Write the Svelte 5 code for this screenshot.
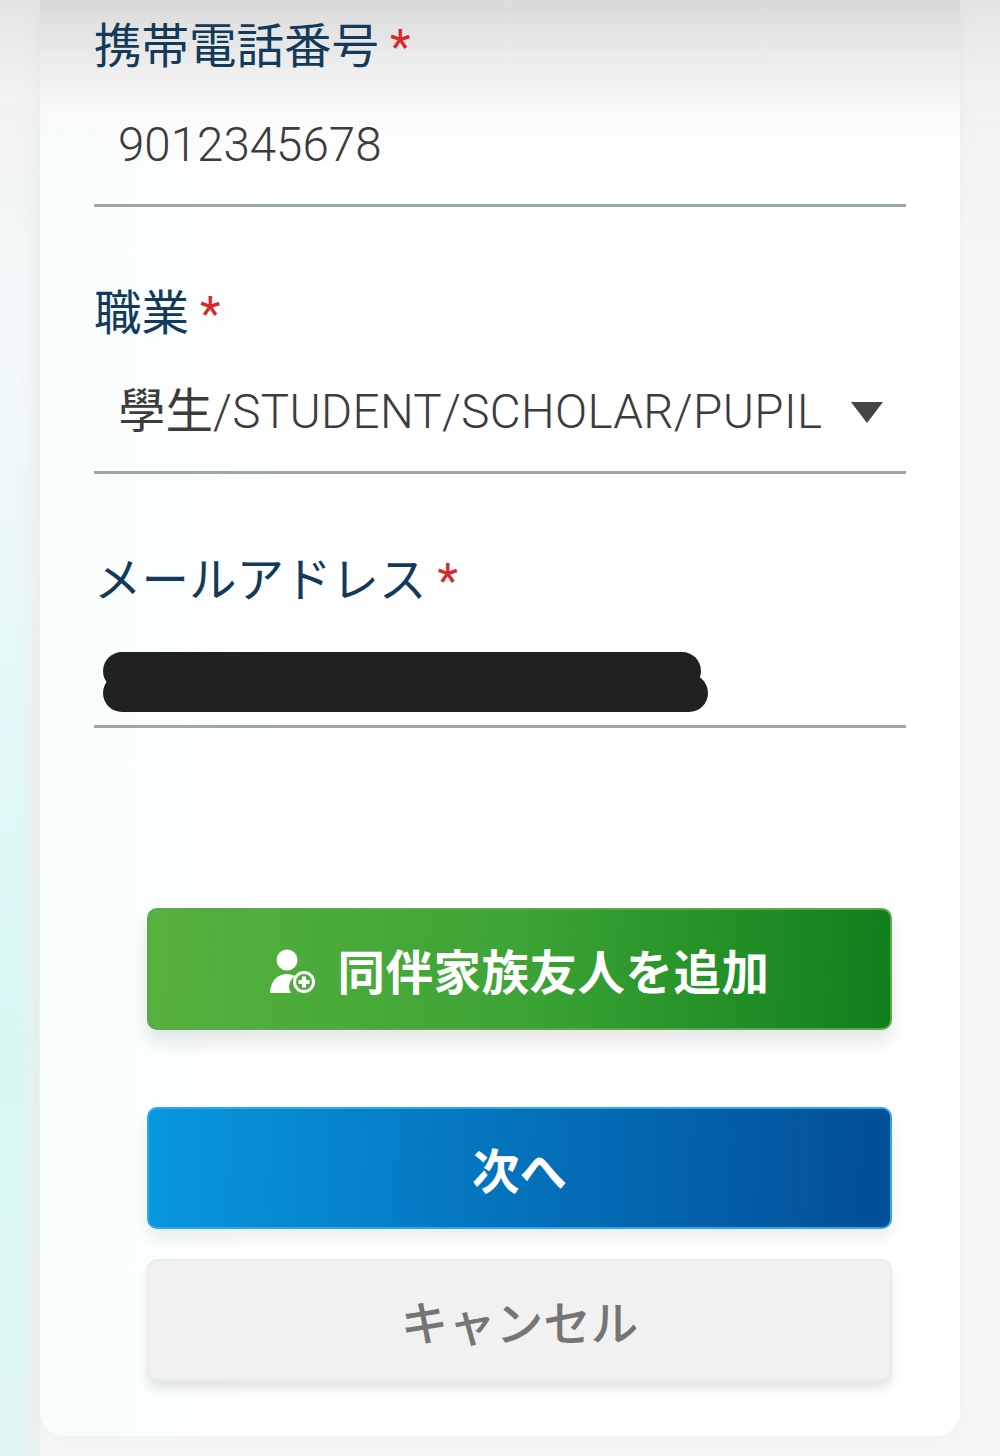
<script>
	const fields = [
		{ label: "携帯電話番号", value: "9012345678" },
		{ label: "職業", kanji: "學生", value: "/STUDENT/SCHOLAR/PUPIL", select: true },
		{ label: "メールアドレス", hidden: true }
	];
</script>

<div class="page">
	<main class="card">
		{#each fields as f}
			<section class="field">
				<div class="label">{f.label}<span class="req">*</span></div>
				{#if f.hidden}
					<div class="input masked">
						<div class="pill top"></div>
						<div class="pill bottom"></div>
					</div>
				{:else}
					<div class="input" class:select={f.select}>
						<span class="value">{#if f.kanji}<span class="kanji">{f.kanji}</span>{/if}{f.value}</span>
						{#if f.select}<span class="arrow"></span>{/if}
					</div>
				{/if}
			</section>
		{/each}

		<div class="actions">
			<button class="btn green">
				<svg viewBox="0 0 46 46" width="46" height="46" aria-hidden="true">
					<circle cx="17" cy="11" r="10.5" fill="#fff" />
					<path d="M0 44c0-1 0-3 1-6 2-8 8-13 16-13 3 0 6 1 8 2-4 3-6 7-6 11 0 2 1 4 2 6z" fill="#fff" />
					<circle cx="34" cy="33" r="9.5" fill="none" stroke="#fff" stroke-width="3" />
					<path d="M34 27.500v11M28.500 33h11" stroke="#fff" stroke-width="4" />
				</svg>
				<span>同伴家族友人を追加</span>
			</button>
			<button class="btn blue">次へ</button>
			<button class="btn gray">キャンセル</button>
		</div>
	</main>
</div>

<style>
	:global(body) {
		margin: 0;
		font-family: Roboto, "Noto Sans CJK JP", "Noto Sans CJK TC", sans-serif;
	}
	.page {
		height: 1456px;
		box-sizing: border-box;
		overflow: hidden;
		padding: 0 40px 20px;
		background:
			linear-gradient(180deg, #e4e4e4 0, rgba(240, 240, 240, 0.7) 90px, rgba(245, 245, 245, 0) 260px),
			linear-gradient(90deg, rgba(240, 240, 240, 0) 18px, rgba(236, 240, 239, 0.85) 38px, #f5f6f6 42px),
			linear-gradient(180deg, #f6f7f7 0, #f2f9fb 400px, #e4f8f8 700px, #d8f8f4 1050px, #e2f7f3 1456px);
	}
	.card {
		height: 100%;
		box-sizing: border-box;
		padding: 17px 54px 0;
		border-radius: 0 0 24px 24px;
		background:
			linear-gradient(180deg, #dadada 0, #ececec 60px, #fafafa 110px, rgba(255, 255, 255, 0) 170px),
			linear-gradient(90deg, #f6fdfc 0, #ffffff 240px);
		box-shadow: 0 0 16px rgba(0, 0, 0, 0.03);
	}
	.field {
		margin-bottom: 77px;
	}
	.label {
		height: 60px;
		line-height: 60px;
		font-size: 47.500px;
		color: #133a5a;
		white-space: nowrap;
	}
	.req {
		margin-left: 11px;
		color: #d9282a;
	}
	.input {
		box-sizing: border-box;
		height: 130px;
		padding: 8px 24px 0;
		display: flex;
		align-items: center;
		justify-content: space-between;
		border-bottom: 3px solid #9aa8a6;
		font-size: 47.500px;
		font-weight: 300;
		color: #3c3c3c;
		white-space: nowrap;
	}
	.select {
		padding-top: 0;
	}
	.select .value {
		letter-spacing: 0.35px;
	}
	.kanji {
		font-weight: 400;
		letter-spacing: 0;
	}
	.masked {
		height: 117px;
		display: block;
		padding: 41px 0 0 9px;
	}
	.pill {
		height: 38px;
		background: #212121;
		border-radius: 19px;
	}
	.pill.top {
		width: 598px;
	}
	.pill.bottom {
		width: 605px;
		margin-top: -16px;
	}
	.arrow {
		width: 0;
		height: 0;
		margin: 10px -1px 0 0;
		border-left: 16px solid transparent;
		border-right: 16px solid transparent;
		border-top: 21px solid #454545;
	}
	.actions {
		margin-top: 180px;
		padding: 0 14px 0 53px;
		display: flex;
		flex-direction: column;
	}
	.btn {
		height: 122px;
		width: 100%;
		display: flex;
		align-items: center;
		justify-content: center;
		gap: 22px;
		padding: 0;
		border-radius: 10px;
		font-family: inherit;
		font-size: 47.500px;
		font-weight: 700;
		color: #fff;
	}
	.btn span {
		letter-spacing: 0.5px;
	}
	.btn svg {
		margin: 6px 0 0 0;
	}
	.green {
		border: 2px solid #5da84f;
		background: linear-gradient(92deg, #57b13e 0, #3da435 50%, #0f7f1c 100%);
		box-shadow: 0 12px 18px rgba(0, 0, 0, 0.1);
	}
	.blue {
		margin-top: 77px;
		border: 2px solid #2aaaea;
		background: linear-gradient(92deg, #0897de 0, #0472bb 50%, #024d97 100%);
		box-shadow: 0 10px 16px rgba(0, 0, 0, 0.07);
	}
	.gray {
		margin-top: 30px;
		border: 2px solid #ebebeb;
		background: #f1f1f1;
		color: #757575;
		font-weight: 500;
		box-shadow: 0 8px 10px rgba(0, 0, 0, 0.1);
	}
</style>
